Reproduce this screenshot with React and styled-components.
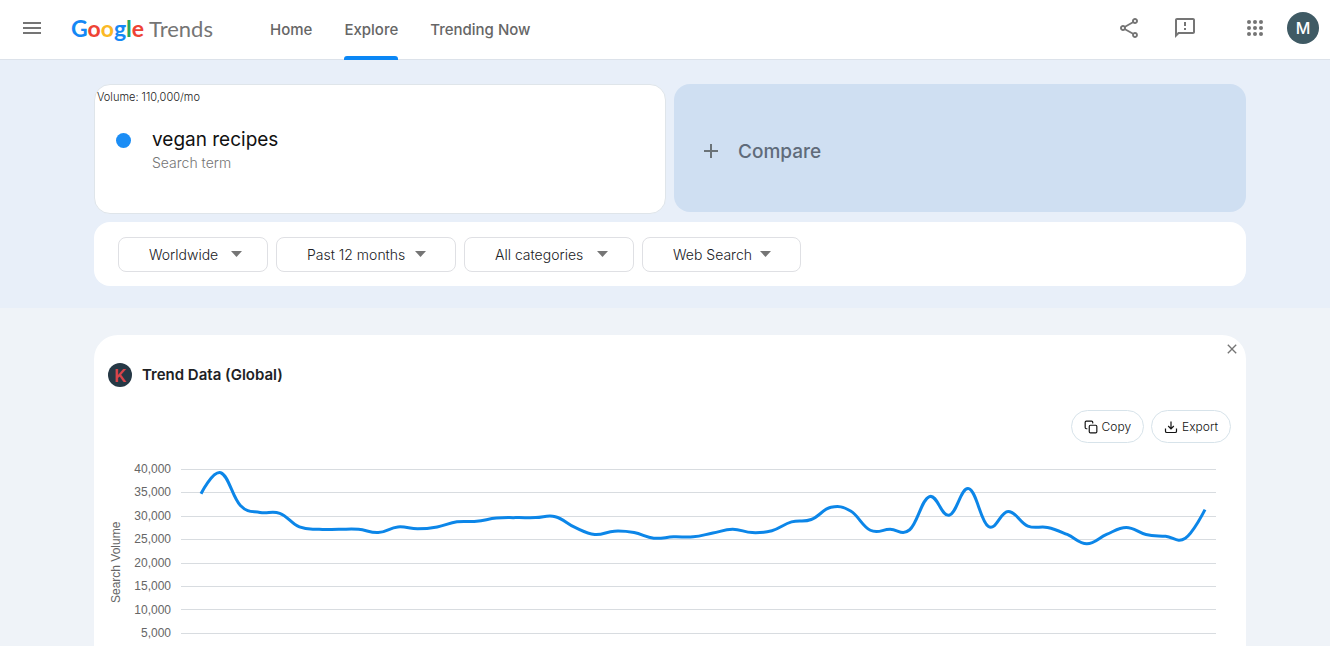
import React from 'react';
import styled, { createGlobalStyle } from 'styled-components';
import { MdMenu, MdOutlineShare, MdOutlineFeedback, MdAdd, MdClose } from 'react-icons/md';
import { FiCopy } from 'react-icons/fi';

const filters = [
	{ label: 'Worldwide', width: 150, end: 25 },
	{ label: 'Past 12 months', width: 180, end: 29 },
	{ label: 'All categories', width: 170, end: 25 },
	{ label: 'Web Search', width: 159, end: 29 }
];

const volumes = [
	34700, 39200, 32200, 30700, 30500, 27600, 27100, 27100, 27100, 26400, 27600, 27200, 27600,
	28700, 28800, 29500, 29600, 29600, 29800, 27500, 26000, 26700, 26400, 25200, 25500, 25500,
	26300, 27100, 26400, 26800, 28700, 29200, 31800, 31000, 26900, 27100, 27000, 34100, 30100,
	35800, 27700, 30900, 27800, 27500, 26000, 24000, 26000, 27500, 26000, 25600, 25200, 31300
];

const ticks = [40000, 35000, 30000, 25000, 20000, 15000, 10000, 5000];
const PLOT_WIDTH = 1035;
const PLOT_HEIGHT = 187;
const MAX = 40000;
const TENSION = 0.2;

const toPoint = (value, i) => ({
	x: 20 + i * (1004 / (volumes.length - 1)),
	y: (1 - value / MAX) * PLOT_HEIGHT
});

const buildPath = values => {
	const pts = values.map(toPoint);
	const last = pts.length - 1;
	// tangent at each point follows the line between its neighbours
	const handle = (i, dir) => {
		if (i === 0 || i === last) return pts[i];
		return {
			x: pts[i].x + dir * TENSION * (pts[i + 1].x - pts[i - 1].x),
			y: pts[i].y + dir * TENSION * (pts[i + 1].y - pts[i - 1].y)
		};
	};
	let d = `M${pts[0].x} ${pts[0].y}`;
	for (let i = 1; i <= last; i++) {
		const a = handle(i - 1, 1);
		const b = handle(i, -1);
		d += ` C${a.x} ${a.y} ${b.x} ${b.y} ${pts[i].x} ${pts[i].y}`;
	}
	return d;
};

const AppsIcon = () => (
	<svg width="16" height="16" viewBox="0 0 16 16" fill="currentColor" aria-hidden="true">
		{[2, 8, 14].map(y => [2, 8, 14].map(x => <circle key={`${x}-${y}`} cx={x} cy={y} r="2" />))}
	</svg>
);

const ExportIcon = () => (
	<svg width="14" height="14" viewBox="0 0 14 14" fill="none" stroke="currentColor" strokeWidth="1.2" aria-hidden="true">
		<path d="M1.5 8.5v2.7c0 .8.5 1.3 1.3 1.3h8.4c.8 0 1.3-.5 1.3-1.3V8.5" />
		<path d="M7 1.5v7.2M4.2 6L7 8.8 9.8 6" />
	</svg>
);

const Arrow = () => (
	<svg width="11" height="6" viewBox="0 0 11 6" fill="#757575" aria-hidden="true">
		<path d="M0 0h11L5.5 6z" />
	</svg>
);

const Chart = () => (
	<ChartArea>
		<AxisTitle>Search Volume</AxisTitle>
		<Labels>
			{ticks.map(t => <li key={t}>{t.toLocaleString('en-US')}</li>)}
		</Labels>
		<Plot viewBox={`0 0 ${PLOT_WIDTH} ${PLOT_HEIGHT}`} preserveAspectRatio="none" role="img" aria-label="Search volume over the past 12 months">
			{ticks.map(t => {
				const y = Math.round((1 - t / MAX) * PLOT_HEIGHT) + 0.5;
				return <line key={t} x1="0" x2={PLOT_WIDTH} y1={y} y2={y} stroke="#d8dce0" />;
			})}
			<path d={buildPath(volumes)} fill="none" stroke="#0c86e8" strokeWidth="3" vectorEffect="non-scaling-stroke" />
		</Plot>
	</ChartArea>
);

const App = () => (
	<Page>
		<GlobalStyle />
		<Header>
			<IconButton aria-label="Main menu"><MdMenu size={24} /></IconButton>
			<Brand href="#home">
				<Google>
					<Letter $color="#1488f5">G</Letter>
					<Letter $color="#ee4334">o</Letter>
					<Letter $color="#fbb924">o</Letter>
					<Letter $color="#1488f5">g</Letter>
					<Letter $color="#26a65b">l</Letter>
					<Letter $color="#ee4334">e</Letter>
				</Google>
				<Product>Trends</Product>
			</Brand>
			<Nav>
				<NavLink href="#home">Home</NavLink>
				<NavLink href="#explore" $active>Explore</NavLink>
				<NavLink href="#trending">Trending Now</NavLink>
			</Nav>
			<Actions>
				<IconButton aria-label="Share"><MdOutlineShare size={24} /></IconButton>
				<IconButton aria-label="Send feedback"><MdOutlineFeedback size={24} /></IconButton>
				<IconButton aria-label="Google apps"><AppsIcon /></IconButton>
			</Actions>
			<Avatar aria-label="Account">M</Avatar>
		</Header>
		<Main>
			<Band>
				<Terms>
					<TermCard>
						<Volume>Volume: 110,000/mo</Volume>
						<Term>
							<Dot />
							<div>
								<TermName>vegan recipes</TermName>
								<TermType>Search term</TermType>
							</div>
						</Term>
					</TermCard>
					<Compare><MdAdd size={24} color="#6b7378" />Compare</Compare>
				</Terms>
				<FilterBar>
					{filters.map(f => (
						<Filter key={f.label} $width={f.width} $end={f.end}>
							<select aria-label={f.label}>
								<option>{f.label}</option>
							</select>
							<Arrow />
						</Filter>
					))}
				</FilterBar>
			</Band>
			<Panel>
				<CloseRow>
					<IconButton aria-label="Close"><MdClose size={16} /></IconButton>
				</CloseRow>
				<PanelTitle>
					<Badge>K</Badge>
					<h2>Trend Data (Global)</h2>
				</PanelTitle>
				<Tools>
					<Pill><FiCopy size={14} />Copy</Pill>
					<Pill><ExportIcon />Export</Pill>
				</Tools>
				<Chart />
			</Panel>
		</Main>
	</Page>
);

export default App;

const GlobalStyle = createGlobalStyle`
	* { box-sizing: border-box; }
	body {
		margin: 0;
		font-family: Inter, "Liberation Sans", sans-serif;
		color: #202124;
	}
	button, select { font-family: inherit; }
`;

const Page = styled.div`
	display: flex;
	flex-direction: column;
	height: 100vh;
`;

const Header = styled.header`
	display: flex;
	flex: none;
	align-items: center;
	height: 60px;
	padding: 0 11px 4px 20px;
	background: #fff;
	border-bottom: 1px solid #dce2ea;
`;

const IconButton = styled.button`
	display: flex;
	align-items: center;
	justify-content: center;
	padding: 0;
	border: 0;
	background: none;
	color: #757575;
	cursor: pointer;
`;

const Brand = styled.a`
	display: flex;
	align-items: baseline;
	gap: 5px;
	width: 142px;
	margin-left: 27px;
	text-decoration: none;
	white-space: nowrap;
`;

const Google = styled.span`
	font-family: Lato, sans-serif;
	font-size: 23px;
	font-weight: 700;
`;

const Letter = styled.span`color: ${props => props.$color};`;

const Product = styled.span`
	font-family: Lato, sans-serif;
	font-size: 22px;
	color: #757575;
`;

const Nav = styled.nav`
	display: flex;
	gap: 32px;
	margin-left: 57px;
`;

const NavLink = styled.a`
	position: relative;
	padding-top: 4px;
	line-height: 56px;
	font-size: 15px;
	font-weight: 500;
	color: #666;
	text-decoration: none;

	&::after {
		content: '';
		display: ${props => (props.$active ? 'block' : 'none')};
		position: absolute;
		left: 0;
		right: 0;
		bottom: -2px;
		height: 4px;
		border-radius: 3px 3px 0 0;
		background: #0b87f5;
	}
`;

const Actions = styled.div`
	display: flex;
	align-items: center;
	gap: 32px;
	margin-left: auto;

	& > :last-child { margin-left: 18px; }
`;

const Avatar = styled.button`
	width: 32px;
	height: 32px;
	margin-left: 24px;
	padding: 0;
	border: 0;
	border-radius: 50%;
	background: #3f5a64;
	color: #fff;
	font-size: 16px;
	font-weight: 500;
`;

const Main = styled.main`
	flex: 1;
	overflow-y: auto;
	scrollbar-width: none;
	background: #eff3f8;
`;

const Band = styled.section`
	padding: 24px 84px 22px 94px;
	background: #e8eff9;
`;

const Terms = styled.div`
	display: grid;
	grid-template-columns: 1fr 1fr;
	align-items: start;
	gap: 8px;
	margin-bottom: 8px;
`;

const TermCard = styled.div`
	height: 130px;
	border: 1px solid #dfe5ea;
	border-radius: 16px;
	background: #fff;
`;

const Volume = styled.div`
	padding: 5px 0 0 2px;
	font-size: 11px;
	line-height: 14px;
	font-weight: 300;
	color: #222;
`;

const Term = styled.div`
	display: flex;
	gap: 21px;
	padding: 24px 0 0 21px;
`;

const Dot = styled.span`
	width: 15px;
	height: 15px;
	margin-top: 5px;
	border-radius: 50%;
	background: #1b8df5;
`;

const TermName = styled.div`
	font-size: 19px;
	line-height: 24px;
	color: #111;
`;

const TermType = styled.div`
	font-size: 14px;
	line-height: 22px;
	font-weight: 300;
	color: #757575;
`;

const Compare = styled.button`
	display: flex;
	align-items: center;
	gap: 15px;
	height: 128px;
	padding: 6px 25px 0;
	border: 0;
	border-radius: 16px;
	background: #cfdff2;
	color: #5f6b7a;
	font-size: 19px;
	font-weight: 500;
`;

const FilterBar = styled.div`
	display: flex;
	align-items: center;
	gap: 8px;
	height: 64px;
	padding: 0 24px;
	border-radius: 16px;
	background: #fff;
`;

const Filter = styled.label`
	display: flex;
	align-items: center;
	width: ${props => props.$width}px;
	height: 35px;
	padding: 0 ${props => props.$end}px 0 30px;
	border: 1px solid #dfe0e4;
	border-radius: 8px;

	select {
		flex: 1;
		min-width: 0;
		padding: 0;
		border: 0;
		background: none;
		appearance: none;
		font-size: 14px;
		font-weight: 300;
		color: #202124;
	}

	svg {
		flex: none;
		pointer-events: none;
	}
`;

const Panel = styled.section`
	margin: 27px 84px 0 94px;
	padding: 6px 15px 24px 14px;
	border-radius: 24px;
	background: #fff;
`;

const CloseRow = styled.div`
	display: flex;
	justify-content: flex-end;
	margin-right: -9px;
`;

const PanelTitle = styled.div`
	display: flex;
	align-items: center;
	gap: 10px;
	height: 24px;
	margin-top: 6px;

	h2 {
		margin: 0;
		font-size: 15px;
		line-height: 22px;
		font-weight: 600;
	}
`;

const Badge = styled.span`
	display: flex;
	align-items: center;
	justify-content: center;
	width: 24px;
	height: 24px;
	border-radius: 50%;
	background: #263845;
	color: #d9454b;
	font: 500 19px Roboto, sans-serif;
`;

const Tools = styled.div`
	display: flex;
	justify-content: flex-end;
	gap: 7px;
	margin-top: 23px;
`;

const Pill = styled.button`
	display: flex;
	align-items: center;
	gap: 4px;
	height: 33px;
	padding: 0 12px;
	border: 1px solid #d7e3ea;
	border-radius: 17px;
	background: #fff;
	color: #111;
	font-size: 12px;
	font-weight: 300;
`;

const ChartArea = styled.div`
	display: flex;
	gap: 10px;
	margin: 26px 15px 0 0;
	font-family: "Liberation Sans", Arial, sans-serif;
	font-size: 12px;
	color: #666;
`;

const AxisTitle = styled.div`
	width: 16px;
	height: 187px;
	line-height: 16px;
	text-align: center;
	writing-mode: vertical-rl;
	transform: rotate(180deg);
`;

const Labels = styled.ul`
	display: flex;
	flex-direction: column;
	justify-content: space-between;
	height: 178px;
	width: 37px;
	margin: -7px 0 0;
	padding: 0;
	list-style: none;
	line-height: 14px;
	text-align: right;
`;

const Plot = styled.svg`
	display: block;
	flex: 1;
	min-width: 0;
	height: 187px;
	overflow: visible;
`;
